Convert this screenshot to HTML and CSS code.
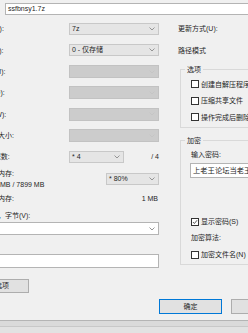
FILE: index.html
```html
<!DOCTYPE html>
<html lang="zh-CN">
<head>
    <meta charset="UTF-8">
    <meta name="viewport" content="width=device-width, initial-scale=1.0">
    <title>添加到压缩包</title>
    <link rel="stylesheet" href="styles.css">
</head>
<body>
    <div class="dialog">
        <div class="archive">
            <div class="archive-label">压缩文件(A):</div>
            <div class="field archive-name">ssfbnsy1.7z</div>
        </div>

        <div class="main">
            <!-- левая колонка: параметры сжатия -->
            <div class="left">
                <div class="rows">
                    <span class="label shifted">压缩格式(F):</span>
                    <div class="combo">7z<svg class="arrow" viewBox="0 0 6 4"><polyline points="0.5,0.5 3,3 5.5,0.5"/></svg></div>

                    <span class="label shifted">压缩等级(L):</span>
                    <div class="combo">0 - 仅存储<svg class="arrow" viewBox="0 0 6 4"><polyline points="0.5,0.5 3,3 5.5,0.5"/></svg></div>

                    <span class="label shifted">压缩方法(M):</span>
                    <div class="combo disabled"><svg class="arrow" viewBox="0 0 6 4"><polyline points="0.5,0.5 3,3 5.5,0.5"/></svg></div>

                    <span class="label shifted">字典大小(D):</span>
                    <div class="combo disabled"><svg class="arrow" viewBox="0 0 6 4"><polyline points="0.5,0.5 3,3 5.5,0.5"/></svg></div>

                    <span class="label shifted">单词大小(W):</span>
                    <div class="combo disabled"><svg class="arrow" viewBox="0 0 6 4"><polyline points="0.5,0.5 3,3 5.5,0.5"/></svg></div>

                    <span class="label">固实数据大小:</span>
                    <div class="combo disabled"><svg class="arrow" viewBox="0 0 6 4"><polyline points="0.5,0.5 3,3 5.5,0.5"/></svg></div>

                    <span class="label">CPU 线程数:</span>
                    <div class="threads">
                        <div class="combo short">* 4<svg class="arrow" viewBox="0 0 6 4"><polyline points="0.5,0.5 3,3 5.5,0.5"/></svg></div>
                        <span>/ 4</span>
                    </div>
                </div>

                <div class="mem-row">
                    <div class="mem-text">
                        <div class="line">压缩所需内存:</div>
                        <div class="line mem-value">1539 MB / 7899 MB</div>
                    </div>
                    <div class="combo mem">* 80%<svg class="arrow" viewBox="0 0 6 4"><polyline points="0.5,0.5 3,3 5.5,0.5"/></svg></div>
                </div>

                <div class="line split decomp">
                    <span>解压所需内存:</span>
                    <span>1 MB</span>
                </div>

                <div class="line volume-label">分卷大小，字节(V):</div>
                <div class="combo edit"><svg class="arrow" viewBox="0 0 6 4"><polyline points="0.5,0.5 3,3 5.5,0.5"/></svg></div>

                <div class="line params-label">参数(P):</div>
                <div class="field params"></div>

                <button class="btn btn-options">选项</button>
            </div>

            <!-- правая колонка -->
            <div class="right">
                <div class="rows-right">
                    <span class="label">更新方式(U):</span>
                    <span class="label">路径模式</span>
                </div>

                <fieldset class="group options">
                    <legend>选项</legend>
                    <div class="check"><span class="box"></span>创建自解压程序(X)</div>
                    <div class="check"><span class="box"></span>压缩共享文件</div>
                    <div class="check"><span class="box"></span>操作完成后删除源文件</div>
                </fieldset>

                <fieldset class="group crypt">
                    <legend>加密</legend>
                    <div class="line">输入密码:</div>
                    <div class="field password">上老王论坛当老王论坛</div>
                    <div class="check show-pass"><span class="box"><svg viewBox="0 0 8 8"><polyline points="1.2,4 3.2,6 6.8,1.6"/></svg></span>显示密码(S)</div>
                    <div class="line algo">加密算法:</div>
                    <div class="check enc-names"><span class="box"></span>加密文件名(N)</div>
                </fieldset>
            </div>
        </div>

        <div class="footer">
            <button class="btn btn-default">确定</button>
            <button class="btn">取消</button>
            <button class="btn">帮助</button>
        </div>
    </div>
    <div class="frame-edge"></div>
</body>
</html>
```

FILE: styles.css
```css
:root {
    --face: #f0f0f0;
    --text: #1f1f1f;
    --combo-bg: #e5e5e5;
    --combo-border: #c8c8c8;
    --disabled-bg: #cccccc;
    --disabled-border: #c2c2c2;
    --group-line: #d9d9d9;
    --field-border: #b4b4b4;
}

html, body {
    margin: 0;
    height: 100%;
}

body {
    background: var(--face);
    font-family: "Liberation Sans", "Noto Sans CJK SC", sans-serif;
    font-size: 7px;
    line-height: 11px;
    color: var(--text);
    overflow: hidden;
    display: flex;
    flex-direction: column;
}

.dialog {
    flex: none;
    width: 416px;
    margin: -11px 0 0 -40px;
}

/* строка имени архива */
.archive-label {
    padding-left: 10px;
    line-height: 14px;
    height: 14px;
}

.archive-name {
    margin-left: 45px;
    height: 12px;
    line-height: 10px;
}

.field {
    box-sizing: border-box;
    background: #fff;
    border: 1px solid var(--field-border);
    padding-left: 2px;
    white-space: nowrap;
    overflow: hidden;
}

.main {
    display: flex;
    padding-top: 3.33px;
}

.left {
    width: 200px;
    box-sizing: border-box;
    padding: 0 1px 0 10px;
    display: flex;
    flex-direction: column;
}

.rows {
    display: grid;
    grid-template-columns: 99px 90px;
    grid-auto-rows: 21.33px;
    align-items: center;
}

.label {
    white-space: nowrap;
}

.label.shifted {
    margin-left: -5px;
}

.combo {
    box-sizing: border-box;
    height: 12px;
    background: var(--combo-bg);
    border: 1px solid var(--combo-border);
    padding: 0 3px 0 2px;
    display: flex;
    align-items: center;
    justify-content: space-between;
    white-space: nowrap;
    line-height: 10px;
}

.combo.disabled {
    height: 13px;
    background: var(--disabled-bg);
    border-color: var(--disabled-border);
    justify-content: flex-end;
}

.combo.edit {
    height: 13px;
    background: #fff;
    border-color: var(--field-border);
    justify-content: flex-end;
    margin-top: 1.5px;
}

.arrow {
    width: 6px;
    height: 4px;
    flex: none;
}

.arrow polyline {
    fill: none;
    stroke: #8a8a8a;
    stroke-width: 0.9;
}

.disabled .arrow polyline {
    stroke: #c4c4c4;
}

.threads {
    display: flex;
    align-items: center;
    justify-content: space-between;
}

.combo.short {
    width: 55px;
}

.line {
    line-height: 11px;
    white-space: nowrap;
}

.mem-row {
    display: flex;
    align-items: center;
    justify-content: space-between;
}

.mem-value {
    margin-left: 12.5px;
}

.combo.mem {
    width: 53px;
}

.split {
    display: flex;
    justify-content: space-between;
    padding-right: 1px;
}

.decomp {
    margin-top: 3px;
}

.volume-label {
    margin-top: 6px;
}

.params-label {
    margin-top: 4.8px;
}

.params {
    margin-top: 3px;
    height: 14px;
}

.btn {
    box-sizing: border-box;
    height: 15px;
    width: 63px;
    padding: 0;
    font: inherit;
    line-height: 13px;
    color: var(--text);
    background: #e1e1e1;
    border: 1px solid #adadad;
    border-radius: 0;
}

.btn-options {
    margin: 11px 0 0 5px;
    width: 54px;
    height: 14px;
    line-height: 12px;
}

/* правая колонка */
.right {
    margin-left: 18px;
    width: 188px;
}

.rows-right {
    display: grid;
    grid-auto-rows: 21.33px;
    align-items: center;
}

.group {
    margin: 0 0 0 2px;
    border: 1px solid var(--group-line);
    padding: 1px 0 0 10px;
    min-width: 0;
}

.group legend {
    padding: 0 2px;
    margin-left: -6px;
    line-height: 10px;
}

.options {
    margin-top: 4px;
    padding-bottom: 2px;
}

.crypt {
    margin-top: 7.5px;
    padding-top: 3px;
    padding-bottom: 0.75px;
}

.check {
    height: 16.5px;
    display: flex;
    align-items: center;
    white-space: nowrap;
}

.box {
    box-sizing: border-box;
    width: 8px;
    height: 8px;
    border: 1px solid #333;
    background: #fff;
    margin-right: 2px;
    flex: none;
    display: flex;
}

.box svg {
    width: 6px;
    height: 6px;
}

.box polyline {
    fill: none;
    stroke: #222;
    stroke-width: 1;
}

.password {
    margin: 3px 0 0 -1px;
    height: 15px;
    line-height: 13px;
    font-size: 7.3px;
}

.show-pass {
    margin-top: 35.75px;
}

.algo {
    margin-top: 2.25px;
}

.enc-names {
    margin-top: 3.25px;
}

.footer {
    display: flex;
    justify-content: flex-end;
    gap: 9px;
    margin-top: 6px;
    padding: 0 10px 6px 0;
}

.btn-default {
    border-color: #0078d7;
}

/* нижняя кромка окна */
.frame-edge {
    flex: 1;
    border-top: 1px solid #b4b4b4;
    background: linear-gradient(#dadada 0 5px, #c8c8c8 5px 6px, #e2e2e2 6px);
}
```
